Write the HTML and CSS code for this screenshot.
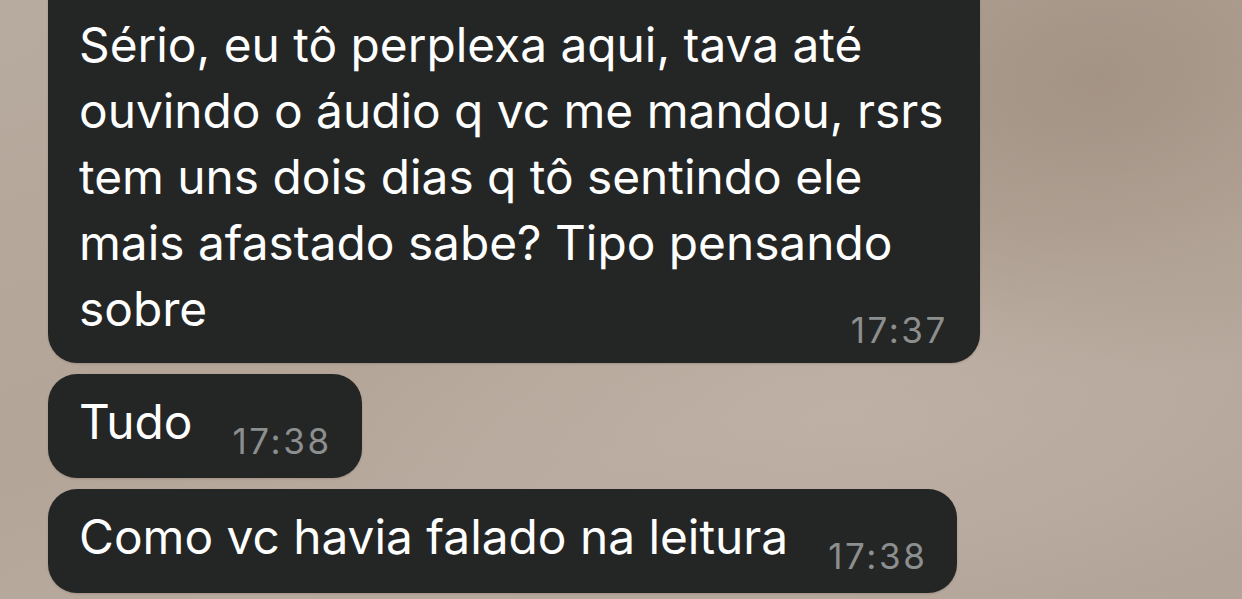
FILE: index.html
```html
<!DOCTYPE html>
<html lang="pt">
<head>
<meta charset="utf-8">
<link rel="stylesheet" href="styles.css">
</head>
<body>
<div class="chat">
  <div class="bubble multi">
    <div class="text">Sério, eu tô perplexa aqui, tava até<br>ouvindo o áudio q vc me mandou, rsrs<br>tem uns dois dias q tô sentindo ele<br>mais afastado sabe? Tipo pensando<br>sobre</div>
    <div class="time">17:37</div>
  </div>
  <div class="bubble">
    <div class="text">Tudo</div>
    <div class="time">17:38</div>
  </div>
  <div class="bubble">
    <div class="text">Como vc havia falado na leitura</div>
    <div class="time">17:38</div>
  </div>
</div>
</body>
</html>
```
FILE: styles.css
```css
html, body {
  margin: 0;
  height: 100%;
}
body {
  width: 1242px;
  height: 599px;
  overflow: hidden;
  font-family: "Inter", "Liberation Sans", sans-serif;
  background:
    radial-gradient(ellipse 420px 300px at 1100px 80px, rgba(150,132,118,0.55), rgba(150,132,118,0) 100%),
    radial-gradient(ellipse 500px 200px at 850px 420px, rgba(196,182,170,0.5), rgba(196,182,170,0) 100%),
    linear-gradient(160deg, #b7aa9e 0%, #b3a598 45%, #b8aa9e 65%, #b2a498 100%);
}
.chat {
  display: flex;
  flex-direction: column;
  align-items: flex-start;
  gap: 11px;
  padding-left: 48px;
  margin-top: -40px;
}
.bubble {
  display: flex;
  align-items: flex-end;
  background: #242626;
  border-radius: 29px;
  padding: 15px 32px 19px 31px;
  box-shadow: 0 1px 2px rgba(60, 40, 30, 0.18);
}
.text {
  color: #ffffff;
  font-size: 47.8px;
  line-height: 66px;
  margin-bottom: 4px;
  white-space: nowrap;
}
.time {
  color: #8d8e8e;
  font-size: 35px;
  line-height: 36px;
  letter-spacing: 2.6px;
  margin-left: 40px;
  margin-right: -2px;
  white-space: nowrap;
}
.bubble.multi {
  display: grid;
  width: 932px;
  box-sizing: border-box;
  padding-top: 52px;
  padding-bottom: 17px;
}
.bubble.multi .text,
.bubble.multi .time {
  grid-area: 1 / 1;
}
.bubble.multi .time {
  justify-self: end;
  align-self: end;
  margin-left: 0;
  margin-right: 0;
  margin-bottom: -2px;
}
```
